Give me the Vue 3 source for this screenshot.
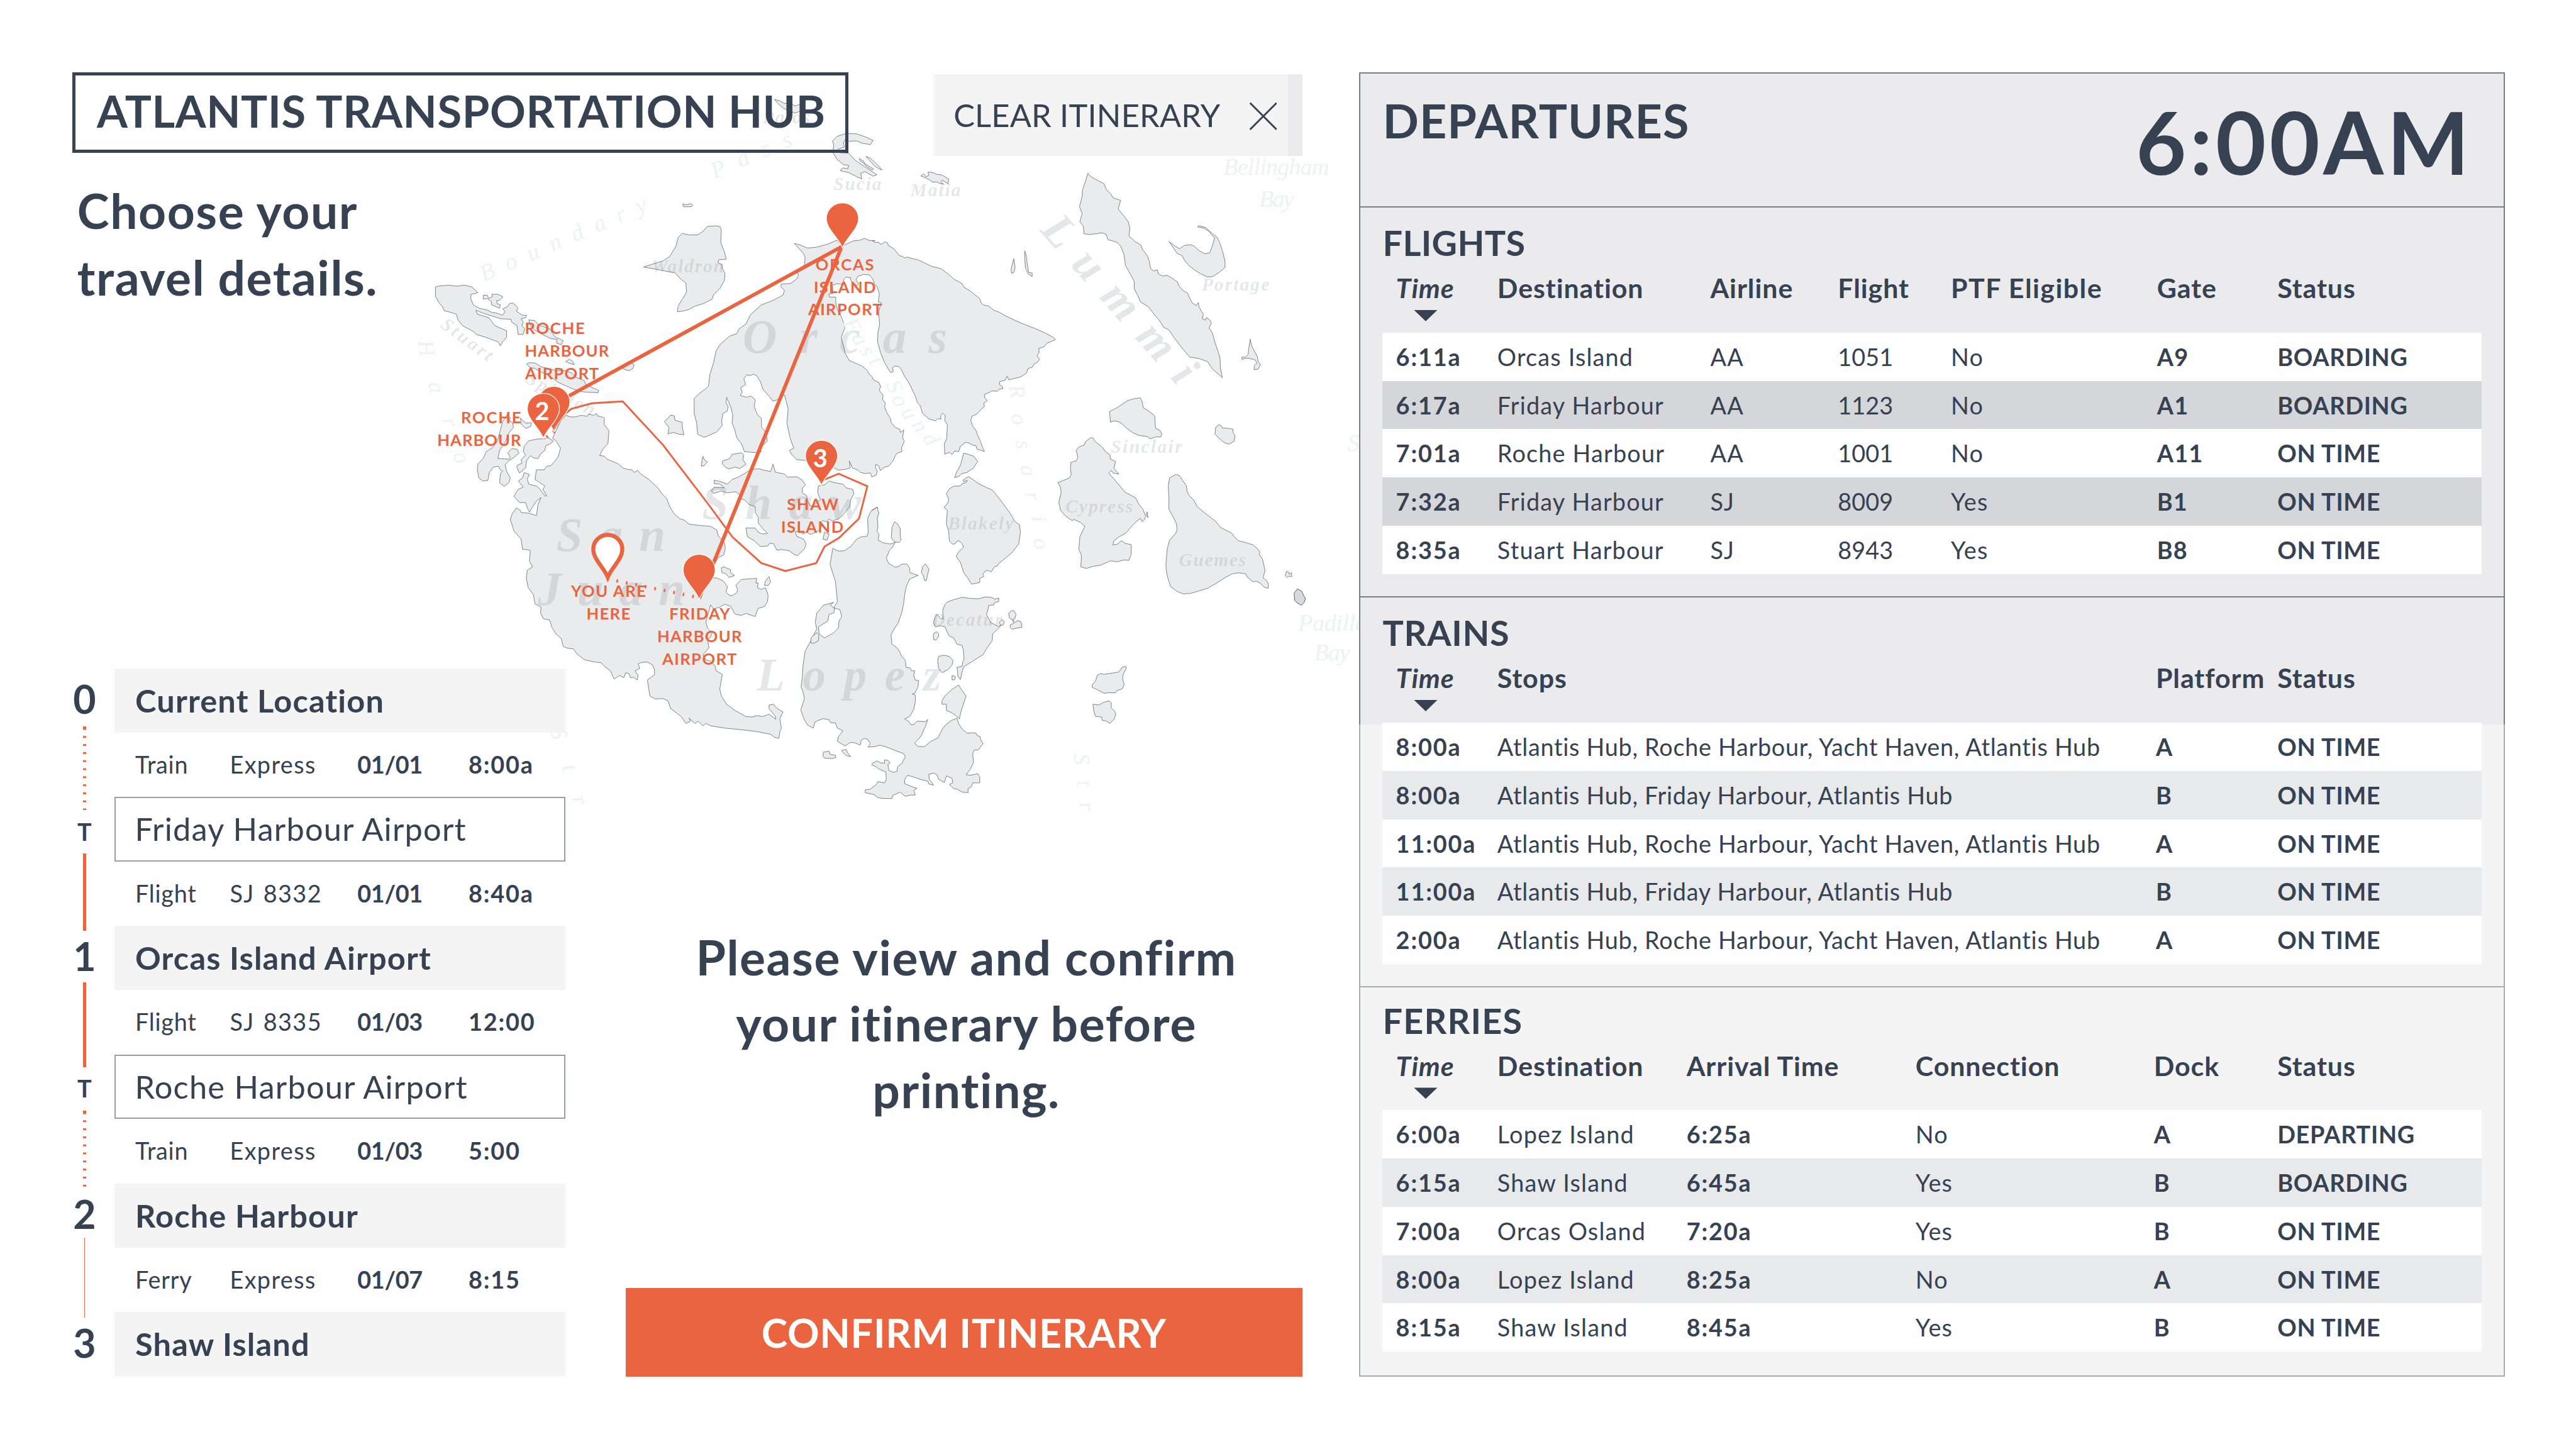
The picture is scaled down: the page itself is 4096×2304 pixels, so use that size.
<script setup>
/* ---------- Archipelago map ---------- */
// Coastlines are digitised on sheets, each with its own origin and grid size.
const sheets = {
  T: [100, 100, 1.3393, 0.5102],
  A: [1000, 350, 0.76531, 0.57398],
  B: [2100, 350, 0.82908, 0.57398],
  C: [1000, 1150, 0.76531, 0.57398],
  D: [2100, 1150, 0.82908, 0.57398],
}
const at = (s, x, y) => {
  const [ox, oy, sx, sy] = sheets[s]
  return [+(ox + x * sx).toFixed(1), +(oy + y * sy).toFixed(1)]
}
const trace = (src) => {
  let s = 'A'
  const pts = []
  for (const tok of src.trim().split(/\s+/)) {
    if (sheets[tok]) s = tok
    else pts.push(at(s, ...tok.split(',').map(Number)))
  }
  return pts.map((p) => p.join(',')).join(' ')
}

const islands = [
  // Orcas
  'A 1272,444 1290,450 1315,464 1345,460 1380,447 1410,430 1428,455 1465,432 1485,430 1500,422 1515,431 1535,432 B 80,432 90,440 100,438 103,446 112,446 118,436 126,441 130,454 145,466 155,484 163,497 172,500 177,507 186,503 200,509 218,515 240,530 262,545 275,548 290,556 310,578 325,598 350,618 356,634 375,650 390,668 403,683 408,703 415,711 430,715 445,733 462,742 480,757 510,778 540,796 570,813 600,832 625,852 630,860 618,868 605,875 595,892 580,898 581,915 575,930 582,945 578,955 565,968 560,980 548,985 543,1005 525,1022 490,1034 485,1018 480,1035 463,1042 462,1055 470,1062 473,1072 462,1074 455,1084 440,1082 430,1090 417,1098 418,1112 426,1124 415,1135 417,1150 405,1165 395,1182 380,1192 376,1210 382,1235 392,1255 397,1275 405,1300 411,1325 417,1345 408,1340 395,1335 392,1320 380,1316 370,1307 360,1305 345,1322 340,1345 328,1342 320,1358 312,1348 298,1356 297,1310 304,1290 306,1230 298,1210 300,1190 292,1179 286,1188 287,1205 278,1202 270,1212 250,1203 232,1180 224,1145 216,1132 210,1105 200,1075 190,1045 178,1020 168,990 160,976 148,975 142,982 144,998 136,1003 128,985 118,960 106,918 97,870 98,830 103,795 100,740 108,700 99,697 102,660 95,630 88,620 82,597 72,580 55,578 38,586 32,602 40,618 35,628 25,613 18,608 15,592 A 1455,592 1440,590 1432,600 1432,622 1410,618 1396,625 1398,660 1384,663 1386,676 1406,676 1407,705 1412,730 1428,772 1436,810 1424,850 1432,890 1437,920 1450,950 1470,962 B 40,968 50,975 65,992 72,1010 80,1020 85,1035 100,1045 106,1062 102,1080 113,1100 112,1120 120,1135 118,1150 124,1175 135,1200 138,1220 150,1240 163,1248 165,1262 175,1252 172,1285 177,1300 168,1330 170,1345 155,1352 150,1362 143,1385 130,1408 118,1412 105,1427 101,1408 92,1400 90,1412 96,1430 92,1448 80,1454 75,1437 60,1440 45,1435 38,1425 22,1416 12,1385 15,1415 0,1422 A 1415,1425 1370,1395 1340,1382 1305,1383 1280,1380 1262,1355 1256,1340 1270,1330 1258,1285 1248,1220 1252,1160 1246,1128 1240,1100 1225,1108 1215,1122 1202,1126 1190,1105 1170,1075 1162,1042 1150,1016 1138,1010 1130,1016 1118,1012 1108,1030 1114,1055 1098,1068 1103,1088 1096,1102 1118,1110 1130,1104 1145,1120 1142,1150 1152,1185 1165,1200 1166,1240 1180,1262 1184,1300 1172,1315 1162,1308 1158,1330 1165,1345 1150,1350 1110,1345 1100,1310 1085,1285 1078,1248 1070,1220 1072,1185 1065,1150 1052,1110 1050,1132 1057,1150 1054,1170 1040,1180 1036,1215 1038,1232 1020,1260 980,1283 958,1270 955,1220 947,1180 947,1115 962,1095 985,1072 993,1062 998,1010 1010,960 1018,910 1030,883 1045,865 1062,845 1085,835 1092,815 1115,792 1130,752 1165,710 1200,692 1235,668 1240,648 1228,630 1230,620 1260,617 1278,600 1285,585 1283,565 1305,535 1307,505 1303,490 1290,470',
  // San Juan
  'A 530,1188 545,1195 560,1195 580,1188 600,1192 605,1182 620,1188 630,1180 632,1190 655,1198 655,1228 670,1255 667,1310 650,1335 640,1362 655,1365 665,1378 700,1398 715,1415 C 730,28 745,30 752,42 763,32 775,50 800,72 830,110 840,130 858,155 868,190 880,217 900,242 915,248 930,265 960,270 1000,275 1020,290 1025,315 1045,345 1048,370 1043,398 1025,410 1012,440 1002,470 1010,498 1020,498 1040,510 1055,535 1050,560 1060,572 1070,575 1085,562 1088,548 1082,530 1100,505 1125,502 1150,500 1147,520 1155,520 1152,540 1165,548 1178,540 1187,572 1185,600 1175,622 1155,630 1150,645 1145,665 1115,652 1100,660 1080,655 1065,620 1045,612 1030,625 1010,632 1000,615 993,650 985,690 990,715 1005,735 1000,755 990,765 995,800 975,830 985,852 1000,858 1015,880 1018,900 1038,915 1030,980 1035,1008 1052,1045 1080,1072 1115,1098 1135,1100 1150,1094 1170,1098 1190,1088 1212,1110 1210,1095 1190,1065 1190,1048 1205,1045 1215,1062 1235,1078 1225,1108 1230,1150 1225,1162 1222,1192 1208,1188 1195,1175 1150,1163 1100,1155 1045,1148 1000,1138 985,1128 975,1138 960,1118 950,1128 930,1105 935,1118 920,1128 905,1098 895,1088 870,1062 862,1030 845,1020 820,1022 803,1008 795,940 818,918 818,895 812,875 795,862 775,864 765,870 770,890 755,900 765,920 762,940 750,928 740,930 735,912 725,908 718,930 705,920 687,936 675,900 655,880 645,865 625,862 590,852 565,825 555,805 535,802 522,795 515,760 498,740 485,712 478,680 458,675 448,650 450,625 430,610 425,570 408,540 402,500 405,465 422,450 412,425 415,380 402,375 390,375 385,330 362,295 350,245 356,220 370,195 382,205 385,215 410,218 435,228 440,180 450,150 435,165 425,185 412,213 404,190 400,172 380,172 362,145 375,115 392,105 376,78 390,65 395,42 412,50 405,70 410,92 435,100 445,112 462,143 468,143 456,115 462,100 430,72 435,30 460,30 468,15 482,12 490,0 A 505,1368 513,1330 498,1298 487,1288 500,1250 515,1210',
  'A 395,1322 410,1298 440,1290 462,1290 470,1282 490,1300 478,1312 465,1320 462,1340 450,1352 440,1375 425,1372 415,1362 402,1385 400,1415 380,1438 372,1415 372,1405 388,1395 385,1380 400,1360 392,1345',
  // Henry
  'A 340,1185 350,1200 347,1212 358,1220 360,1240 345,1265 335,1300 315,1340 310,1375 345,1378 350,1370 342,1350 355,1332 372,1335 378,1352 362,1370 345,1385 333,1402 338,1430 350,1460 345,1480 330,1495 315,1480 318,1440 325,1430 315,1420 312,1408 295,1412 282,1435 277,1470 262,1472 248,1460 243,1425 245,1398 262,1375 272,1345 292,1328 308,1300 318,1250 325,1215',
  'A 383,1200 385,1225 400,1245 417,1235 418,1220 400,1222',
  // Stuart and Johns
  'A 107,632 120,628 150,625 180,629 200,624 225,632 245,657 222,665 222,685 230,710 250,725 275,732 290,742 305,745 325,755 333,738 325,727 340,718 348,704 358,702 368,712 375,725 370,738 390,755 403,755 400,765 385,770 392,785 387,800 397,812 392,838 375,838 372,800 355,785 352,772 320,770 300,762 260,745 238,733 243,750 280,765 300,800 338,822 338,850 325,870 318,887 310,870 300,865 270,850 240,838 230,825 195,800 180,775 175,750 150,740 135,735 130,718 118,700 107,672',
  'A 262,668 275,668 280,682 292,675 290,664 310,664 326,675 315,690 305,692 308,705 318,710 315,724 290,710 288,695 275,682 262,685',
  'A 410,775 430,778 440,795 480,815 485,830 495,848 522,865 515,882 500,875 502,860 480,855 450,835 430,820 415,800',
  // Spieden
  'A 403,965 412,960 432,962 450,978 475,985 495,993 530,995 550,1005 562,1022 590,1038 595,1055 620,1070 637,1080 635,1090 600,1088 580,1085 550,1072 530,1060 505,1045 480,1018 445,998 430,985 412,980',
  'A 530,955 542,945 553,955 557,968 540,962',
  'A 715,970 735,958 752,968 748,985 735,995 718,988',
  // Waldron and Skipjack
  'A 990,370 1015,368 1030,370 1035,385 1033,440 1045,480 1051,512 1026,515 1024,528 1037,535 1038,550 1047,575 1045,605 1030,640 1010,665 1005,685 975,705 950,715 930,730 910,737 892,740 895,715 905,692 912,678 922,655 920,615 905,600 885,572 840,560 800,550 782,546 815,532 845,520 868,500 888,455 895,418 908,401 930,407 958,407 975,392',
  'A 910,273 922,276 935,272 942,278 938,285 912,285',
  // Patos, Sucia, Matia
  'T 1362,288 1372,295 1380,308 1392,308 1400,320 1412,310 1418,320 1416,340 1400,355 1388,342 1378,330 1370,312',
  'T 1472,515 1470,490 1478,468 1495,454 1515,456 1535,475 1545,488 1540,508 1525,502 1515,490 1500,492 1494,480 1490,500 1492,520 1480,530 1484,548 1500,550 1510,580 1520,600 1535,625 1552,655 1545,662 1530,640 1522,648 1524,675 1515,665 1500,645 1484,635 1488,622 1498,625 1500,610 1490,605 1478,580 1470,545',
  'B 42,76 55,88 58,98 85,122 80,126 65,112 55,96 45,88',
  'B 62,67 75,75 98,105 110,126 102,122 85,105',
  'B 226,152 235,143 242,155 250,150 248,135 262,137 275,145 290,148 310,165 308,185 290,170 286,178 295,188 282,184 276,178 260,178 252,168 238,158',
  // Lummi
  'B 727,140 735,153 752,168 775,185 783,212 795,228 803,247 825,257 818,295 835,325 848,350 853,378 850,412 868,435 885,450 892,472 905,497 911,520 915,553 925,563 935,558 938,575 950,585 965,582 980,595 995,610 1000,628 1012,648 1025,658 1032,680 1040,702 1052,713 1058,700 1060,718 1068,740 1073,750 1070,770 1080,776 1082,765 1092,775 1097,790 1090,810 1100,830 1108,873 1118,915 1123,940 1124,980 1130,1025 1112,1002 1102,990 1085,955 1060,942 1032,936 1020,915 1000,880 985,850 970,818 955,808 940,775 930,758 908,718 885,697 875,665 866,640 866,608 850,565 840,540 835,490 825,455 815,440 800,432 787,428 782,405 770,398 752,402 730,405 715,402 714,370 703,350 710,315 702,285 710,240 711,212 720,175',
  // Portage
  'B 970,435 985,452 1002,467 1015,453 1032,449 1045,455 1060,475 1078,489 1092,485 1100,455 1107,420 1100,410 1090,392 1075,378 1055,372 1060,367 1080,375 1100,402 1113,415 1122,440 1130,475 1138,520 1138,548 1118,572 1100,588 1085,589 1065,575 1050,562 1030,540 1018,520 1008,495 995,488',
  'B 1214,858 1216,878 1222,900 1235,933 1237,955 1244,968 1237,988 1225,990 1226,972 1234,962 1228,948 1210,941 1195,942 1190,948 1188,936 1200,936 1207,925 1210,890',
  'B 505,510 509,548 505,570 498,573 497,555',
  'B 538,476 543,500 545,530 550,570 560,572 560,588 548,575 540,550 538,510',
  'B 885,1112 890,1130 893,1155 910,1170 927,1190 930,1245 942,1252 949,1270 945,1282 930,1281 915,1290 905,1280 880,1275 860,1262 840,1240 830,1225 818,1215 805,1212 795,1218 792,1172 820,1150 845,1125 865,1116',
  'B 1120,1228 1128,1235 1130,1243 1148,1244 1162,1248 1162,1262 1168,1275 1165,1300 1150,1313 1135,1306 1118,1285 1108,1268 1110,1240',
  // Cypress
  'B 742,1285 748,1300 770,1325 780,1345 793,1358 795,1378 810,1388 805,1418 820,1442 803,1438 797,1426 790,1438 798,1452 820,1488 838,1520 870,1545 D 880,180 892,200 900,230 897,245 890,255 885,240 875,250 855,280 840,305 820,320 805,338 802,355 815,352 828,337 838,348 857,354 857,395 850,422 835,420 815,428 795,424 765,443 742,448 723,457 706,450 708,400 700,375 703,320 718,275 705,258 685,244 680,250 660,230 645,205 640,170 647,130 645,105 637,85 650,78 672,65 677,50 B 675,1420 676,1392 692,1385 697,1370 692,1340 700,1325 715,1318 720,1302 735,1285',
  'D 905,212 907,238 902,225',
  // Guemes
  'D 990,50 1002,56 1012,78 1022,98 1025,125 1030,140 1045,163 1055,190 1080,220 1110,253 1125,280 1157,303 1165,318 1178,337 1200,345 1222,355 1236,372 1243,388 1240,395 1250,415 1254,440 1258,465 1252,498 1262,508 1268,525 1267,543 1255,538 1245,522 1232,512 1222,515 1205,495 1200,480 1180,476 1160,480 1140,495 1110,523 1085,543 1058,555 1035,565 1013,567 995,557 975,535 967,500 962,465 961,440 965,370 972,335 990,305 994,290 993,265 985,240 970,200 970,150 968,100 972,65',
  // Blakely
  'D 370,60 380,70 400,90 425,108 440,117 455,142 475,180 495,220 508,253 522,268 525,300 520,350 500,388 482,410 460,435 455,447 448,448 437,472 428,465 420,468 412,482 415,492 403,500 403,518 378,525 368,500 355,475 345,430 332,405 340,385 355,365 350,350 342,338 335,338 330,350 322,352 312,338 310,295 303,265 306,205 296,193 308,172 310,155 303,135 312,112 325,101 345,100 350,90 362,85 366,75 355,82 353,75 362,65',
  'B 355,1352 370,1357 385,1365 397,1388 390,1402 385,1415 365,1435 350,1440 340,1452 328,1458 333,1435 345,1405',
  // Decatur
  'D 305,603 325,592 350,582 375,587 400,588 420,580 440,583 448,590 460,585 460,600 447,605 445,615 430,617 427,640 423,655 435,690 450,702 458,708 468,700 462,712 442,740 440,770 425,800 413,830 380,860 355,882 350,905 345,938 338,925 335,885 350,880 352,862 356,850 354,810 350,790 335,785 325,758 312,750 303,725 300,710 285,705 270,710 264,690 270,665 275,655 287,675 293,675 292,640 298,615',
  'D 267,735 275,731 280,740 280,752 272,767 265,765 264,745',
  'D 280,838 295,832 312,838 323,855 320,875 308,895 290,908 280,890 277,855',
  'D 320,920 330,925 328,938 320,940',
  'D 490,650 498,640 505,640 512,655 508,675 502,678 510,692 515,682 527,688 530,712 512,716 500,720 494,712 495,700 505,695 502,680 492,672',
  'D 470,678 477,690 472,703 465,702 461,690',
  'D 240,437 251,460 247,482 243,510 237,508 235,490 228,475 232,450',
  'D 148,255 157,265 165,285 165,320 167,335 160,345 148,342 138,325 140,280',
  // Lopez
  'D 97,192 98,210 101,215 96,240 98,275 95,298 101,308 99,335 115,347 135,351 145,347 150,343 140,368 132,380 123,412 130,435 150,452 160,448 170,438 185,438 193,455 194,475 218,487 193,503 183,535 178,570 175,610 170,645 158,695 145,722 137,745 140,785 155,800 163,817 168,835 180,855 182,885 195,888 198,900 208,900 205,920 210,940 220,942 218,970 208,998 200,1000 210,1005 210,1035 205,1068 193,1098 178,1108 190,1118 195,1132 205,1133 215,1118 240,1120 247,1110 242,1135 228,1180 220,1195 208,1212 218,1228 238,1228 255,1207 278,1190 290,1155 300,1135 318,1115 335,1105 340,1130 350,1152 365,1170 380,1168 392,1170 395,1180 405,1185 405,1195 413,1215 405,1230 398,1243 387,1242 382,1258 384,1298 375,1325 362,1350 375,1352 390,1348 397,1345 403,1360 403,1385 382,1385 378,1402 368,1410 368,1427 350,1425 335,1412 325,1410 312,1392 322,1385 320,1365 303,1355 300,1370 297,1383 280,1370 275,1350 265,1343 250,1348 252,1370 265,1395 250,1390 248,1378 230,1372 205,1360 187,1352 178,1370 178,1388 205,1405 215,1408 205,1418 210,1438 195,1438 180,1443 165,1425 142,1440 140,1453 110,1452 97,1448 85,1435 60,1428 60,1415 75,1412 95,1390 97,1380 118,1385 123,1370 122,1338 100,1325 92,1315 80,1308 82,1300 95,1290 105,1298 118,1300 118,1285 128,1288 135,1298 128,1305 130,1330 145,1340 155,1335 157,1315 170,1300 180,1272 175,1258 155,1248 120,1228 102,1222 90,1228 68,1230 75,1215 68,1198 58,1192 48,1200 45,1222 30,1212 15,1210 0,1225 C 1430,1220 1412,1205 1415,1185 1430,1160 1412,1148 1405,1125 1390,1125 1385,1112 1365,1107 1340,1120 1333,1148 1315,1135 1303,1108 1293,1070 1305,1020 1300,990 1294,970 1298,925 1300,880 1307,815 1330,760 1338,735 1345,720 1340,690 1345,650 1368,615 1400,604 1388,615 1403,630 1400,650 1385,655 1380,685 1350,710 1353,740 1370,758 1400,735 1415,715 1417,685 1426,665 1420,635 1400,628 1412,600 1405,510 1395,470 1388,440 1393,400 1397,370 1415,382 1435,380 1455,362 1475,330 1490,320 1508,318 1512,300 1510,240 1520,210 1540,192 D 80,205',
  'D 340,962 350,985 362,1010 355,1040 348,1070 342,1108 332,1095 320,1082 303,1072 303,1045 290,1045 290,1030 298,1010 320,980',
  'C 1327,755 1345,735 1352,745 1350,770 1335,782 1325,778',
  'C 1367,1252 1385,1248 1388,1262 1405,1265 1407,1275 1395,1280 1370,1278 1365,1268',
  'C 1425,1245 1440,1240 1445,1255 1455,1272 1438,1265',
  'D 840,880 843,888 833,915 831,935 836,960 830,978 815,985 810,995 790,995 775,997 760,985 740,972 740,960 750,945 755,920 765,912 775,915 800,910 820,905 830,885',
  'D 790,1030 797,1038 797,1060 807,1075 811,1088 805,1110 793,1128 783,1118 770,1115 768,1100 750,1097 745,1075 742,1045 760,1048 772,1038',
  // Shaw
  'C 1115,42 1130,30 1155,25 1175,32 1195,38 1203,5 1210,40 1240,48 1250,62 1280,60 1298,75 1308,95 1298,110 1298,130 1312,142 1315,165 1325,188 1335,185 1345,170 1357,160 1348,130 1350,100 1370,95 1385,78 1400,85 1430,92 1440,108 1462,115 1465,135 1455,160 1452,190 1430,225 1415,243 1395,252 1385,243 1375,255 1365,250 1355,262 1362,275 1350,295 1325,310 1312,300 1300,308 1288,295 1275,298 1280,318 1302,330 1310,350 1305,372 1282,402 1270,395 1255,380 1245,378 1230,375 1215,378 1205,350 1192,348 1185,360 1162,362 1140,335 1120,320 1115,282 1145,282 1155,300 1168,308 1185,305 1170,285 1155,260 1155,235 1145,215 1145,190 1125,180 1110,160 1098,155 1095,138 1082,125 1055,130 1035,122 1010,132 1002,122 1012,105 1045,108 1030,92 1012,90 1012,75 1030,80 1055,92 1070,72 1090,62',
  'C 1370,300 1385,308 1378,335 1365,330',
  'C 1035,455 1042,450 1065,462 1065,475 1078,488 1060,496 1050,480 1037,475',
  'C 1190,492 1195,515 1188,530 1175,530 1178,512',
  'A 870,1187 882,1190 885,1210 908,1218 908,1240 914,1272 898,1270 880,1262 862,1268 865,1240 850,1215 862,1200',
  'A 975,1365 980,1380 990,1390 980,1405 970,1408 972,1385',
  'A 1040,1385 1062,1375 1070,1357 1100,1350 1108,1360 1105,1380 1115,1400 1095,1418 1080,1412 1060,1420 1048,1412 1038,1398',
  'D 1322,470 1328,472 1330,482 1337,475 1338,492 1330,490 1325,497 1319,488',
]
const coast = islands.map(trace)
const darkIsle = trace('D 1355,545 1368,556 1373,572 1379,588 1375,605 1367,616 1355,607 1347,595 1345,565')

const L = (t, s, x1, x2, y, size, cls) => {
  const [x, yy] = at(s, x1, y)
  return { t, x, y: yy, size, cls, len: +(at(s, x2, y)[0] - x).toFixed(0) }
}
const seaLabels = [
  L('Patos', 'T', 1340, 1428, 405, 46, 'isle'),
  L('Sucia', 'A', 1399, 1555, 213, 46, 'isle'),
  L('Matia', 'B', 195, 346, 240, 46, 'isle'),
  L('Waldron', 'A', 808, 1043, 568, 46, 'isle'),
  L('Portage', 'B', 1068, 1271, 649, 46, 'isle'),
  L('Sinclair', 'B', 796, 1009, 1350, 46, 'isle'),
  L('Cypress', 'D', 660, 861, 215, 46, 'isle'),
  L('Blakely', 'D', 307, 503, 289, 46, 'isle'),
  L('Guemes', 'D', 1000, 1200, 447, 46, 'isle'),
  L('Decatur', 'D', 259, 470, 706, 46, 'isle'),
  { t: 'Orcas', x: 1845, y: 876, size: 118, cls: 'isle', len: 508 },
  { t: 'San', x: 1382, y: 1368, size: 118, cls: 'isle', len: 271 },
  { t: 'Juan', x: 1336, y: 1503, size: 118, cls: 'isle', len: 366 },
  { t: 'Shaw', x: 1744, y: 1289, size: 118, cls: 'isle', len: 396 },
  { t: 'Lopez', x: 1880, y: 1715, size: 114, cls: 'isle', len: 458 },
  { t: 'Lummi', x: 2582, y: 573, size: 114, cls: 'isle', len: 520, rot: 48.4 },
  { t: 'Stuart', x: 1092, y: 812, size: 46, cls: 'isle', len: 148, rot: 36 },
  { t: 'Spieden', x: 1304, y: 950, size: 46, cls: 'isle', len: 186, rot: 27 },
  { t: 'Boundary', x: 1202, y: 700, size: 58, cls: 'water', len: 446, rot: -23.5 },
  { t: 'Pass', x: 1775, y: 444, size: 58, cls: 'water', len: 214, rot: -23 },
  L('Bellingham', 'B', 1133, 1450, 147, 60, 'water'),
  L('Bay', 'B', 1240, 1345, 287, 60, 'water'),
  L('Padilla', 'D', 1357, 1565, 727, 60, 'water'),
  L('Bay', 'D', 1405, 1512, 855, 60, 'water'),
  L('Samish', 'B', 1505, 1700, 1343, 60, 'water'),
]
// Letters that follow a channel one by one: sheet, glyph, centre, turn.
const channel = [
  ['A', 'H', 74, 898, 80], ['A', 'a', 108, 1068, 80], ['A', 'r', 152, 1218, 75], ['A', 'o', 188, 1372, 70],
  ['C', 'S', 505, 1172, 75], ['C', 't', 540, 1320, 75], ['C', 'r', 574, 1462, 75],
  ['B', 'R', 512, 1085, 82], ['B', 'o', 518, 1205, 82], ['B', 's', 532, 1315, 82], ['B', 'a', 546, 1428, 82],
  ['D', 'r', 560, 145, 82], ['D', 'i', 578, 243, 82], ['D', 'o', 585, 350, 82],
  ['B', 'E', 18, 800, 62], ['B', 'a', 42, 860, 62], ['B', 's', 65, 910, 62], ['B', 't', 90, 953, 62],
  ['B', 'S', 145, 1065, 62], ['B', 'o', 163, 1125, 60], ['B', 'u', 190, 1180, 60], ['B', 'n', 222, 1235, 58], ['B', 'd', 255, 1292, 58],
  ['D', 'S', 706, 1283, 85], ['D', 't', 715, 1388, 85], ['D', 'r', 722, 1487, 85],
].map(([s, t, x, y, rot]) => {
  const p = at(s, x, y)
  return { t, x: p[0], y: p[1], rot }
})
const ports = [
  L('ORCAS', 'A', 1341, 1531, 560), L('ISLAND', 'A', 1335, 1536, 658), L('AIRPORT', 'A', 1317, 1557, 755),
  L('ROCHE', 'A', 397, 592, 837), L('HARBOUR', 'A', 397, 670, 935), L('AIRPORT', 'A', 398, 637, 1033),
  L('ROCHE', 'A', 190, 385, 1222), L('HARBOUR', 'A', 113, 385, 1320),
  L('SHAW', 'C', 1248, 1415, 205), L('ISLAND', 'C', 1229, 1432, 302),
  L('YOU ARE', 'C', 547, 790, 581), L('HERE', 'C', 597, 740, 679),
  L('FRIDAY', 'C', 866, 1063, 679), L('HARBOUR', 'C', 827, 1101, 777), L('AIRPORT', 'C', 843, 1085, 875),
]
const pinShape = 'M0 0C-9 -25 -40 -47 -40 -73A40 39 0 0 1 40 -73C40 -47 9 -25 0 0Z'
const pins = [
  { x: 2093, y: 616 },
  { x: 1376, y: 1072 },
  { x: 1350, y: 1089, n: '2' },
  { x: 2041, y: 1206, n: '3' },
  { x: 1737, y: 1489 },
]
const ferryRoute = trace('A 490,1255 525,1185 548,1160 615,1136 715,1128 845,1315 990,1568 C 1072,322 1165,434 1243,468 1343,434 1370,362 1417,325 1482,241 1509,101 1416,47 1360,78')

/* ---------- Itinerary ---------- */
const rows = [
  { stop: 'Current Location' },
  { leg: ['Train', 'Express', '01/01', '8:00a'] },
  { stop: 'Friday Harbour Airport', transfer: true },
  { leg: ['Flight', 'SJ 8332', '01/01', '8:40a'] },
  { stop: 'Orcas Island Airport' },
  { leg: ['Flight', 'SJ 8335', '01/03', '12:00'] },
  { stop: 'Roche Harbour Airport', transfer: true },
  { leg: ['Train', 'Express', '01/03', '5:00'] },
  { stop: 'Roche Harbour' },
  { leg: ['Ferry', 'Express', '01/07', '8:15'] },
  { stop: 'Shaw Island' },
]
const rail = [
  { mark: '0', h: 1.44, lh: 1.49 }, { line: 'dots', h: 2.08 },
  { mark: 'T', h: 1.08, lh: 1.08 }, { line: 'solid', h: 1.92 },
  { mark: '1', h: 1.28, lh: 1.26 }, { line: 'solid', h: 2.12 },
  { mark: 'T', h: 1.08, lh: 1.07 }, { line: 'dots', h: 1.88 },
  { mark: '2', h: 1.27, lh: 1.33 }, { line: 'thin', h: 1.98 },
  { mark: '3', h: 1.47, lh: 1.24 },
]

/* ---------- Departures ---------- */
const hub = 'Atlantis Hub'
const longLine = `${hub}, Roche Harbour, Yacht Haven, ${hub}`
const shortLine = `${hub}, Friday Harbour, ${hub}`
const boards = [
  {
    id: 'flights', title: 'FLIGHTS',
    cols: [['Time', 'time'], ['Destination', 'light'], ['Airline', 'light'], ['Flight', 'light num'], ['PTF Eligible', 'light'], ['Gate', 'bold'], ['Status', 'status']],
    rows: [
      ['6:11a', 'Orcas Island', 'AA', '1051', 'No', 'A9', 'BOARDING'],
      ['6:17a', 'Friday Harbour', 'AA', '1123', 'No', 'A1', 'BOARDING'],
      ['7:01a', 'Roche Harbour', 'AA', '1001', 'No', 'A11', 'ON TIME'],
      ['7:32a', 'Friday Harbour', 'SJ', '8009', 'Yes', 'B1', 'ON TIME'],
      ['8:35a', 'Stuart Harbour', 'SJ', '8943', 'Yes', 'B8', 'ON TIME'],
    ],
  },
  {
    id: 'trains', title: 'TRAINS',
    cols: [['Time', 'time'], ['Stops', 'light route'], ['Platform', 'bold'], ['Status', 'status']],
    rows: [
      ['8:00a', longLine, 'A', 'ON TIME'],
      ['8:00a', shortLine, 'B', 'ON TIME'],
      ['11:00a', longLine, 'A', 'ON TIME'],
      ['11:00a', shortLine, 'B', 'ON TIME'],
      ['2:00a', longLine, 'A', 'ON TIME'],
    ],
  },
  {
    id: 'ferries', title: 'FERRIES',
    cols: [['Time', 'time'], ['Destination', 'light'], ['Arrival Time', 'time'], ['Connection', 'light'], ['Dock', 'bold'], ['Status', 'status']],
    rows: [
      ['6:00a', 'Lopez Island', '6:25a', 'No', 'A', 'DEPARTING'],
      ['6:15a', 'Shaw Island', '6:45a', 'Yes', 'B', 'BOARDING'],
      ['7:00a', 'Orcas Osland', '7:20a', 'Yes', 'B', 'ON TIME'],
      ['8:00a', 'Lopez Island', '8:25a', 'No', 'A', 'ON TIME'],
      ['8:15a', 'Shaw Island', '8:45a', 'Yes', 'B', 'ON TIME'],
    ],
  },
]
</script>

<template>
  <div class="hub">
    <svg class="map" viewBox="0 0 6400 3600">
      <g class="land">
        <polygon v-for="(p, i) in coast" :key="i" :points="p" />
        <polygon class="dark" :points="darkIsle" />
      </g>
      <text
        v-for="(l, i) in seaLabels" :key="'s' + i" :class="l.cls" :font-size="l.size" :textLength="l.len"
        :x="l.x" :y="l.y" :transform="l.rot ? `rotate(${l.rot} ${l.x} ${l.y})` : null"
      >{{ l.t }}</text>
      <text
        v-for="(c, i) in channel" :key="'c' + i" class="water" font-size="56" text-anchor="middle"
        :transform="`translate(${c.x} ${c.y}) rotate(${c.rot})`" y="16"
      >{{ c.t }}</text>

      <g class="track">
        <line x1="2091" y1="613" x2="1400" y2="991" stroke-width="9" />
        <line x1="2091" y1="613" x2="1737" y2="1487" stroke-width="9" />
        <polyline :points="ferryRoute" stroke-width="4.5" />
        <line x1="1508" y1="1438" x2="1733" y2="1484" stroke-width="8" stroke-dasharray="4 20" />
        <line x1="1358" y1="1086" x2="1382" y2="1068" stroke-width="8" stroke-dasharray="4 16" />
      </g>
      <g v-for="(p, i) in pins" :key="'p' + i" :transform="`translate(${p.x} ${p.y})`">
        <path class="pin" :d="pinShape" />
        <text v-if="p.n" class="pin-number" x="-3" y="-45" text-anchor="middle">{{ p.n }}</text>
      </g>
      <path class="pin-here" d="M0 0C-10 -25 -36 -44 -36 -70A36 35 0 0 1 36 -70C36 -44 10 -25 0 0Z" transform="translate(1510 1434)" />
      <text v-for="(l, i) in ports" :key="'t' + i" class="port" :x="l.x" :y="l.y" :textLength="l.len">{{ l.t }}</text>
    </svg>

    <main class="planner">
      <header class="top">
        <h1>ATLANTIS TRANSPORTATION HUB</h1>
        <button class="clear">
          <span>CLEAR ITINERARY</span>
          <svg viewBox="0 0 68 68"><path d="M1 1L67 67M67 1L1 67" /></svg>
        </button>
      </header>
      <p class="prompt">Choose your<br />travel details.</p>

      <div class="lower">
        <div class="itinerary">
          <div class="rail">
            <template v-for="(r, i) in rail" :key="i">
              <b v-if="r.mark" :class="{ small: r.mark === 'T' }" :style="{ height: r.h + 'rem', lineHeight: r.lh + 'rem' }">{{ r.mark }}</b>
              <i v-else :class="r.line" :style="{ height: r.h + 'rem' }"></i>
            </template>
          </div>
          <ol>
            <li v-for="(r, i) in rows" :key="i" :class="r.leg ? 'leg' : r.transfer ? 'transfer' : 'stop'">
              <template v-if="r.leg"><span v-for="(c, j) in r.leg" :key="j">{{ c }}</span></template>
              <template v-else>{{ r.stop }}</template>
            </li>
          </ol>
        </div>
        <div class="confirm">
          <p>Please view and confirm<br />your itinerary before<br />printing.</p>
          <button>CONFIRM ITINERARY</button>
        </div>
      </div>
    </main>

    <aside class="departures">
      <header>
        <h2>DEPARTURES</h2>
        <time>6:00AM</time>
      </header>
      <section v-for="b in boards" :key="b.id" :class="b.id">
        <h3>{{ b.title }}</h3>
        <div class="row head">
          <span v-for="(c, i) in b.cols" :key="c[0]" :class="{ sorted: i === 0, ptf: c[0] === 'PTF Eligible' }">{{ c[0] }}</span>
        </div>
        <div v-for="(r, i) in b.rows" :key="i" class="row item" :class="{ shaded: i % 2 }">
          <span v-for="(c, j) in r" :key="j" :class="b.cols[j][1]">{{ c }}</span>
        </div>
      </section>
    </aside>
  </div>
</template>

<style>
html { font-size: 64px; }
body { margin: 0; background: #fefefe; overflow: hidden; }
</style>

<style scoped>
.hub {
  position: relative;
  display: flex;
  justify-content: space-between;
  box-sizing: border-box;
  width: 64rem;
  height: 36rem;
  padding: 1.8rem 1.76rem 1.8rem 1.8rem;
  overflow: hidden;
  color: #364152;
  font-family: Lato, sans-serif;
}
h1, h2, h3, p, ol { margin: 0; padding: 0; }
button { border: 0; padding: 0; color: inherit; font-family: inherit; }

/* Map */
.map { position: absolute; inset: 0; width: 100%; height: 100%; }
.land polygon { fill: #eaebed; stroke: #6f7883; stroke-width: 1.4; stroke-linejoin: round; }
.land .dark { fill: #d7dade; stroke: #46505e; }
.isle { fill: #364152; fill-opacity: 0.125; font-family: "Liberation Serif", serif; font-weight: 700; font-style: italic; }
.water { fill: #eef2f2; font-family: "Liberation Serif", serif; font-style: italic; }
.track { fill: none; stroke: #e9643f; }
.pin { fill: #e9643f; stroke: #fff; stroke-width: 2; }
.pin-here { fill: #fff; stroke: #e9643f; stroke-width: 10; }
.pin-number { fill: #fff; font-size: 62px; font-weight: 700; }
.port { fill: #e9643f; font-size: 40px; font-weight: 700; }

/* Planner */
.planner { position: relative; display: flex; flex-direction: column; width: 30.56rem; }
.top { display: flex; justify-content: space-between; align-items: flex-start; height: 2.08rem; }
h1 {
  box-sizing: border-box;
  width: 19.28rem;
  height: 2rem;
  padding-left: 0.53rem;
  border: 0.08rem solid #364152;
  font-size: 1.1rem;
  line-height: 1.77rem;
  letter-spacing: 0.009em;
  white-space: nowrap;
}
.clear {
  display: flex;
  box-sizing: border-box;
  width: 9.16rem;
  height: 2.04rem;
  margin-top: 0.04rem;
  padding-left: 0.49rem;
  border-right: 0.36rem solid #ebebed;
  background: #f4f4f4;
  font-size: 0.79rem;
  line-height: 2.02rem;
  letter-spacing: 0.004em;
  white-space: nowrap;
}
.clear svg { width: 0.68rem; height: 0.68rem; margin: 0.71rem 0.28rem 0 auto; }
.clear path { stroke: #364152; stroke-width: 4.5; }
.prompt { margin: 0.53rem 0 0 0.12rem; }
.prompt, .confirm p { font-size: 1.2rem; font-weight: 700; line-height: 1.65rem; letter-spacing: 0.02em; }
.lower { display: flex; justify-content: space-between; align-items: flex-end; margin-top: auto; }

.itinerary { display: flex; gap: 0.44rem; }
.rail { display: flex; flex-direction: column; align-items: center; width: 0.6rem; }
.rail b { font-size: 0.98rem; }
.rail .small { font-size: 0.59rem; }
.rail i { width: 0.08rem; background: #e9643f; }
.rail .thin { width: 0.02rem; }
.rail .dots {
  background:
    linear-gradient(#e9643f, #e9643f) 0 0 / 100% 0.08rem no-repeat,
    linear-gradient(#e9643f 0 0.04rem, transparent 0.04rem) 0 0.04rem / 100% 0.2rem;
}
.itinerary ol { width: 11.2rem; list-style: none; }
.itinerary li { box-sizing: border-box; height: 1.6rem; padding-left: 0.52rem; line-height: 1.6rem; font-size: 0.79rem; white-space: nowrap; }
.stop { background: #f4f4f4; font-weight: 700; letter-spacing: 0.023em; }
.itinerary .transfer { padding-left: 0.48rem; border: 0.04rem solid #989fa7; line-height: 1.52rem; letter-spacing: 0.024em; }
.itinerary .leg { display: grid; grid-template-columns: 2.35rem 3.17rem 2.76rem 1fr; font-size: 0.59rem; }
.leg span { letter-spacing: 0.038em; }
.leg span:nth-child(1) { letter-spacing: 0.02em; }
.leg span:nth-child(2) { word-spacing: 0.08em; }
.leg span:nth-child(n + 3) { font-weight: 700; }
.leg span:nth-child(3) { letter-spacing: -0.009em; }
.leg span:nth-child(4) { letter-spacing: 0.05em; }

.confirm { width: 16.82rem; text-align: center; }
.confirm p { margin: 0 -0.06rem 4.1rem 0.06rem; }
.confirm button {
  display: block;
  width: 100%;
  height: 2.2rem;
  background: #e9643f;
  color: #fff;
  font-size: 0.98rem;
  font-weight: 700;
  letter-spacing: 0.013em;
}

/* Departures */
.departures {
  position: relative;
  box-sizing: border-box;
  width: 28.48rem;
  border: 0.04rem solid transparent;
  background:
    linear-gradient(#ebebed 50%, #f4f4f4 50%) padding-box,
    linear-gradient(#76808b 50%, #a6acb2 50%) border-box;
}
.departures header { display: flex; justify-content: space-between; height: 3.29rem; padding: 0 0.78rem 0 0.56rem; }
h2 { margin-top: 0.56rem; font-size: 1.18rem; line-height: 1.2rem; letter-spacing: 0.013em; }
time { margin-top: 0.59rem; font-size: 2.16rem; font-weight: 700; line-height: 2.2rem; letter-spacing: 0.039em; }
section { box-sizing: border-box; height: 9.69rem; padding: 0.38rem 0.56rem 0; border-top: 0.04rem solid #76808b; }
.ferries { padding-top: 0.32rem; border-color: #a6acb2; }
h3 { font-size: 0.87rem; line-height: 1rem; letter-spacing: 0.007em; }
.trains h3 { letter-spacing: 0.012em; }
.ferries h3 { letter-spacing: 0.022em; }
.row { display: grid; box-sizing: border-box; padding-left: 0.33rem; white-space: nowrap; }
.flights .row { grid-template-columns: 2.52rem 5.29rem 3.17rem 2.81rem 5.12rem 2.99rem 1fr; }
.trains .row { grid-template-columns: 2.52rem 16.36rem 3.02rem 1fr; }
.ferries .row { grid-template-columns: 2.52rem 4.7rem 5.69rem 5.92rem 3.07rem 1fr; }
.head { height: 1.51rem; margin-top: 0.22rem; font-size: 0.67rem; font-weight: 700; line-height: 0.8rem; letter-spacing: 0.022em; }
.ptf { letter-spacing: 0.034em; }
.sorted { font-style: italic; }
.sorted::after {
  content: "";
  display: block;
  width: 0.58rem;
  height: 0.28rem;
  margin: 0.15rem 0 0 0.45rem;
  background: #364152;
  clip-path: polygon(0 0, 100% 0, 50% 100%);
}
.item { height: 1.2rem; background: #fefefe; font-size: 0.59rem; line-height: 1.21rem; }
.item.shaded { background: #e8e9eb; }
.flights .shaded { background: #d5d6da; }
.item span { font-weight: 700; letter-spacing: 0.03em; }
.item .light { font-weight: 400; letter-spacing: 0.032em; }
.item .num { letter-spacing: 0.002em; }
.item .route { letter-spacing: 0.0195em; }
.item .time { letter-spacing: 0.05em; }
.item .status { letter-spacing: 0.02em; }
</style>
